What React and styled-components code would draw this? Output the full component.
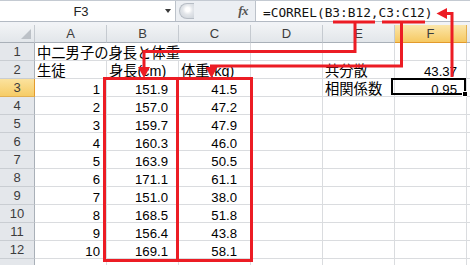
import React from 'react';
import styled, { createGlobalStyle, css } from 'styled-components';

const GlobalStyle = createGlobalStyle`
  html, body { margin: 0; padding: 0; background: #fff; overflow: hidden; }
  * { box-sizing: border-box; }
`;

const Screen = styled.div`
  position: relative;
  width: 470px;
  height: 265px;
  overflow: hidden;
  background: #fff;
  font-family: "Liberation Sans", "Noto Sans CJK JP", sans-serif;
`;

const FormulaBar = styled.div`
  display: flex;
  height: 22px;
  border-top: 1px solid #c4cad2;
  border-bottom: 1px solid #b3bac3;
  background: #eceff3;
`;

const NameBox = styled.div`
  width: 176px;
  display: flex;
  align-items: center;
  background: #fff;
  border-right: 1px solid #bcc2ca;
`;

const NameText = styled.span`
  flex: 1;
  text-align: center;
  font-size: 13px;
  color: #222;
  padding-right: 3px;
`;

const DropArrow = styled.span`
  width: 0;
  height: 0;
  border-left: 3.5px solid transparent;
  border-right: 3.5px solid transparent;
  border-top: 4px solid #3a3a3a;
  margin-right: 4px;
`;

const FxArea = styled.div`
  width: 79px;
  display: flex;
  align-items: center;
  justify-content: space-between;
  padding: 0 7px 0 3px;
`;

const Grip = styled.span`
  width: 15px;
  height: 16px;
  border: 1px solid #b7bdc5;
  border-right: none;
  border-radius: 8px 0 0 8px;
  background: radial-gradient(circle at 55% 40%, #ffffff 0 2px, #e3e6ea 5px, #d3d8de 9px);
`;

const FxLabel = styled.span`
  font-family: "Liberation Serif", serif;
  font-style: italic;
  font-weight: bold;
  font-size: 13px;
  color: #555;
  letter-spacing: -0.5px;
`;

const FormulaInput = styled.div`
  flex: 1;
  background: #fff;
  border-left: 1px solid #bcc2ca;
  font-family: "DejaVu Sans Mono", "Liberation Mono", monospace;
  font-size: 12.8px;
  line-height: 20px;
  padding: 2px 0 0 7px;
  color: #111;
  white-space: nowrap;
  overflow: hidden;
`;

const Divider = styled.div`
  height: 3px;
  background: #f1f3f6;
`;

const Sheet = styled.div`
  display: grid;
  grid-template-columns: 35px repeat(6, 72px) 1fr;
  grid-auto-rows: 18px;
`;

const headerBase = css`
  display: flex;
  align-items: center;
  justify-content: center;
  font-size: 13px;
  color: #3c3c3c;
  white-space: nowrap;
  overflow: hidden;
`;

const Corner = styled.div`
  position: relative;
  background: linear-gradient(#f1f3f5, #e2e6ea);
  border-right: 1px solid #c5cad0;
  border-bottom: 1px solid #a9b0b8;
  &::after {
    content: "";
    position: absolute;
    right: 3px;
    bottom: 3px;
    border-left: 10px solid transparent;
    border-bottom: 10px solid #bcc1c7;
  }
`;

const ColHeader = styled.div`
  ${headerBase};
  background: ${p => (p.$active ? 'linear-gradient(#fbe6ab, #f6c962)' : 'linear-gradient(#f1f3f5, #e2e6ea)')};
  border-right: 1px solid ${p => (p.$active ? '#e2b052' : '#c5cad0')};
  border-bottom: 1px solid ${p => (p.$active ? '#e39a2c' : '#a9b0b8')};
`;

const RowHeader = styled.div`
  ${headerBase};
  background: ${p => (p.$active ? 'linear-gradient(#fbe29e, #f6cc66)' : '#e4e7eb')};
  border-right: 1px solid ${p => (p.$active ? '#e39a2c' : '#a9b0b8')};
  border-bottom: 1px solid ${p => (p.$active ? '#e2b052' : '#c9cdd2')};
`;

const Cell = styled.div`
  position: relative;
  display: flex;
  align-items: flex-end;
  justify-content: ${p => (p.$num ? 'flex-end' : 'flex-start')};
  grid-column: ${p => (p.$span ? `span ${p.$span}` : 'auto')};
  border-right: 1px solid #dadcdf;
  border-bottom: 1px solid #dadcdf;
  padding: 0 ${p => (p.$pr != null ? p.$pr : 2)}px 0 2px;
  font-size: ${p => (p.$num ? '13.2px' : '14.3px')};
  line-height: 13px;
  color: #000;
  white-space: nowrap;
`;

const Selection = styled.div`
  position: absolute;
  top: -1px;
  left: -4px;
  right: 0;
  bottom: 1px;
  border: 2px solid #000;
  pointer-events: none;
`;

const FillHandle = styled.span`
  position: absolute;
  right: -4px;
  bottom: -4px;
  width: 6px;
  height: 6px;
  background: #000;
  border: 1px solid #fff;
`;

const Overlay = styled.svg`
  position: absolute;
  left: 0;
  top: 0;
  pointer-events: none;
`;

const COLS = ['A', 'B', 'C', 'D', 'E', 'F'];
const PAD = { A: 6, B: 10, C: 13, D: 2, E: 2, F: 9 };

const heights = ['151.9', '157.0', '159.7', '160.3', '163.9', '171.1', '151.0', '168.5', '156.4', '169.1'];
const weights = ['41.5', '47.2', '47.9', '46.0', '50.5', '61.1', '38.0', '51.8', '43.8', '58.1'];

function buildRows() {
  const rows = [];
  rows.push({ n: 1, label: '1', cells: [{ col: 'A', text: '中二男子の身長と体重', span: 3 }, { col: 'D' }, { col: 'E' }, { col: 'F' }] });
  rows.push({
    n: 2,
    label: '2',
    cells: [
      { col: 'A', text: '生徒' },
      { col: 'B', text: '身長(cm)' },
      { col: 'C', text: '体重(kg)' },
      { col: 'D' },
      { col: 'E', text: '共分散' },
      { col: 'F', text: '43.37', num: true },
    ],
  });
  for (let i = 0; i < 10; i++) {
    const n = i + 3;
    rows.push({
      n,
      label: String(n),
      cells: [
        { col: 'A', text: String(i + 1), num: true },
        { col: 'B', text: heights[i], num: true },
        { col: 'C', text: weights[i], num: true },
        { col: 'D' },
        { col: 'E', text: n === 3 ? '相関係数' : '' },
        { col: 'F', text: n === 3 ? '0.95' : '', num: n === 3, selected: n === 3 },
      ],
    });
  }
  rows.push({ n: 13, label: '', cells: COLS.map(c => ({ col: c })) });
  return rows;
}

const RED = '#ec1c24';

export default function App() {
  const rows = buildRows();
  return (
    <>
      <GlobalStyle />
      <Screen>
        <FormulaBar>
          <NameBox>
            <NameText>F3</NameText>
            <DropArrow />
          </NameBox>
          <FxArea>
            <Grip />
            <FxLabel>fx</FxLabel>
          </FxArea>
          <FormulaInput>=CORREL(B3:B12,C3:C12)</FormulaInput>
        </FormulaBar>
        <Divider />
        <Sheet>
          <Corner />
          {COLS.map(c => (
            <ColHeader key={c} $active={c === 'F'}>{c}</ColHeader>
          ))}
          <ColHeader />
          {rows.map(r => (
            <React.Fragment key={r.n}>
              <RowHeader $active={r.n === 3}>{r.label}</RowHeader>
              {r.cells.map(c => (
                <Cell
                  key={c.col}
                  $num={c.num}
                  $span={c.span}
                  $pr={c.num ? PAD[c.col] : 2}
                >
                  {c.text}
                  {c.selected && (
                    <Selection>
                      <FillHandle />
                    </Selection>
                  )}
                </Cell>
              ))}
              <Cell />
            </React.Fragment>
          ))}
        </Sheet>
        <Overlay width="470" height="265" viewBox="0 0 470 265">
          <g fill="none" stroke={RED} strokeWidth="3" strokeLinejoin="miter" strokeLinecap="butt">
            <line x1="333" y1="22" x2="375" y2="22" />
            <line x1="382" y1="22" x2="425" y2="22" />
            <polyline points="355,22 355,51.5 144,51.5 144,68" />
            <polyline points="401.5,22 401.5,66 211.5,66 211.5,68" />
            <polyline points="452,77 452,13.5 446,13.5" />
            <rect x="104.5" y="78.5" width="73" height="182" />
            <rect x="177.5" y="78.5" width="74" height="182" />
          </g>
          <g fill={RED}>
            <polygon points="138,67 150,67 144,78" />
            <polygon points="205.5,67 217.5,67 211.5,78" />
            <polygon points="436.5,13.5 447,8 447,19" />
          </g>
        </Overlay>
      </Screen>
    </>
  );
}
